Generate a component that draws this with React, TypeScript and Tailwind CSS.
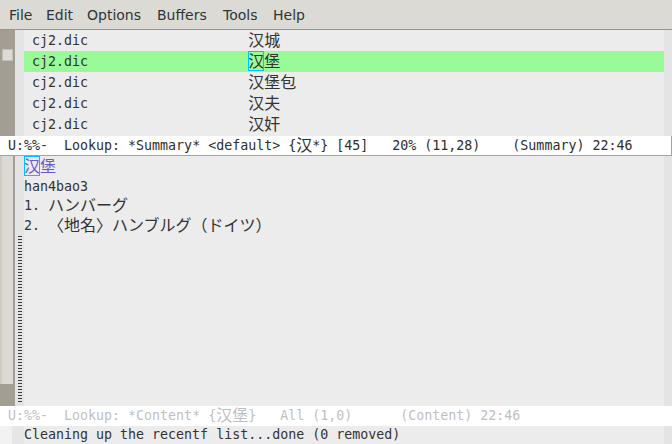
import React from 'react';

// CJK glyphs sit in the mono line at double cell width (16px) without growing the line box
const Zh: React.FC<{ children: React.ReactNode; className?: string }> = ({ children, className }) => (
    <span className={"font-['Noto_Sans_CJK_SC',sans-serif] text-[16px] leading-[0px] align-[-1px] " + (className || '')}>
        {children}
    </span>
);

const Ja: React.FC<{ children: React.ReactNode }> = ({ children }) => (
    <span className="font-['Noto_Sans_CJK_JP',sans-serif] text-[16px] leading-[0px] align-[-1px]">{children}</span>
);

const summary = [
    { word: '汉城', hl: false },
    { word: '汉堡', hl: true },
    { word: '汉堡包', hl: false },
    { word: '汉夫', hl: false },
    { word: '汉奸', hl: false },
];

const menu = [
    { label: 'File', w: 'w-[37px]' },
    { label: 'Edit', w: 'w-[41px]' },
    { label: 'Options', w: 'w-[70px]' },
    { label: 'Buffers', w: 'w-[66px]' },
    { label: 'Tools', w: 'w-[50px]' },
    { label: 'Help', w: 'w-[40px]' },
];

export default function App() {
    return (
        <div className="w-[672px] h-[444px] overflow-hidden flex flex-col bg-[#ececec] text-[#333333] font-['DejaVu_Sans_Mono',monospace] text-[13.3px]">
            {/* Menu bar */}
            <div className="h-[30px] shrink-0 bg-[#dcdad5] border-b border-[#9a958c] flex items-center pt-[2px] pl-[9px] font-['DejaVu_Sans',sans-serif] text-[14px] text-[#2e3436]">
                {menu.map((m) => (
                    <span key={m.label} className={m.w}>{m.label}</span>
                ))}
            </div>

            {/* Summary window */}
            <div className="flex h-[106px] shrink-0">
                <div className="w-[15px] bg-[#a29e94] pt-[19px] pl-[2px]">
                    <div className="w-[11px] h-[12px] bg-[#dedbd6] border border-[#c4c0b9]" />
                </div>
                <div className="w-[9px] bg-[#e4e4e4]" />
                <div className="flex-1 bg-[#ececec]">
                    {summary.map((row) => (
                        <div
                            key={row.word}
                            className={
                                'relative h-[21px] leading-[21px] whitespace-pre ' + (row.hl ? 'bg-[#98fb98]' : '')
                            }
                        >
                            {' cj2.dic' + ' '.repeat(20)}
                            <Zh>{row.word}</Zh>
                            {row.hl && (
                                <span className="absolute left-[224px] top-0 w-[16px] h-[20px] border border-[#00bfff]" />
                            )}
                        </div>
                    ))}
                </div>
                <div className="w-[8px] bg-[#e4e4e4]" />
            </div>

            {/* Active mode line */}
            <div className="h-[20px] shrink-0 bg-white border-b border-r border-[#a3a3a3] pt-[1px] leading-[18px] whitespace-pre text-[#2e2e2e]">
                {' U:%%-  Lookup: *Summary* <default> {'}
                <Zh>汉</Zh>
                {'*} [45]   20% (11,28)    (Summary) 22:46'}
            </div>

            {/* Content window */}
            <div className="flex h-[250px] shrink-0">
                <div className="w-[15px] bg-[#a29e94] flex flex-col">
                    <div className="w-[13px] h-[228px] bg-[#dcd9d3] border-l-2 border-[#cfcbc4]" />
                </div>
                <div className="w-[9px] bg-[#e4e4e4] flex flex-col pt-[80px] pb-[2px] pl-[3px]">
                    <div className="flex-1 w-[4px] bg-[image:repeating-linear-gradient(to_bottom,#3a3a3a_0px,#3a3a3a_1px,transparent_1px,transparent_3px)]" />
                </div>
                <div className="flex-1 bg-[#ececec]">
                    <div className="relative h-[21px] leading-[21px] whitespace-pre">
                        <Zh className="text-[#6a5acd]">汉堡</Zh>
                        <span className="absolute left-0 top-0 w-[16px] h-[20px] border border-[#00bfff]" />
                    </div>
                    <div className="h-[19px] leading-[19px] whitespace-pre">han4bao3</div>
                    <div className="h-[20px] leading-[20px] whitespace-pre">
                        {'1. '}
                        <Ja>ハンバーグ</Ja>
                    </div>
                    <div className="h-[20px] leading-[20px] whitespace-pre">
                        {'2. '}
                        <Ja>〈地名〉ハンブルグ（ドイツ）</Ja>
                    </div>
                </div>
                <div className="w-[8px] bg-[#e4e4e4]" />
            </div>

            {/* Inactive mode line */}
            <div className="h-[20px] shrink-0 bg-white leading-[20px] whitespace-pre text-[#bfbfbf]">
                {' U:%%-  Lookup: *Content* {'}
                <Zh>汉堡</Zh>
                {'}   All (1,0)      (Content) 22:46'}
            </div>

            {/* Echo area */}
            <div className="flex h-[18px] shrink-0 leading-[18px]">
                <div className="w-[12px] bg-[#f2f2f2]" />
                <div className="w-[12px] bg-[#e6e6e6]" />
                <div className="flex-1 bg-[#ececec] whitespace-pre">Cleaning up the recentf list...done (0 removed)</div>
                <div className="w-[8px] bg-[#e4e4e4]" />
            </div>
        </div>
    );
}
